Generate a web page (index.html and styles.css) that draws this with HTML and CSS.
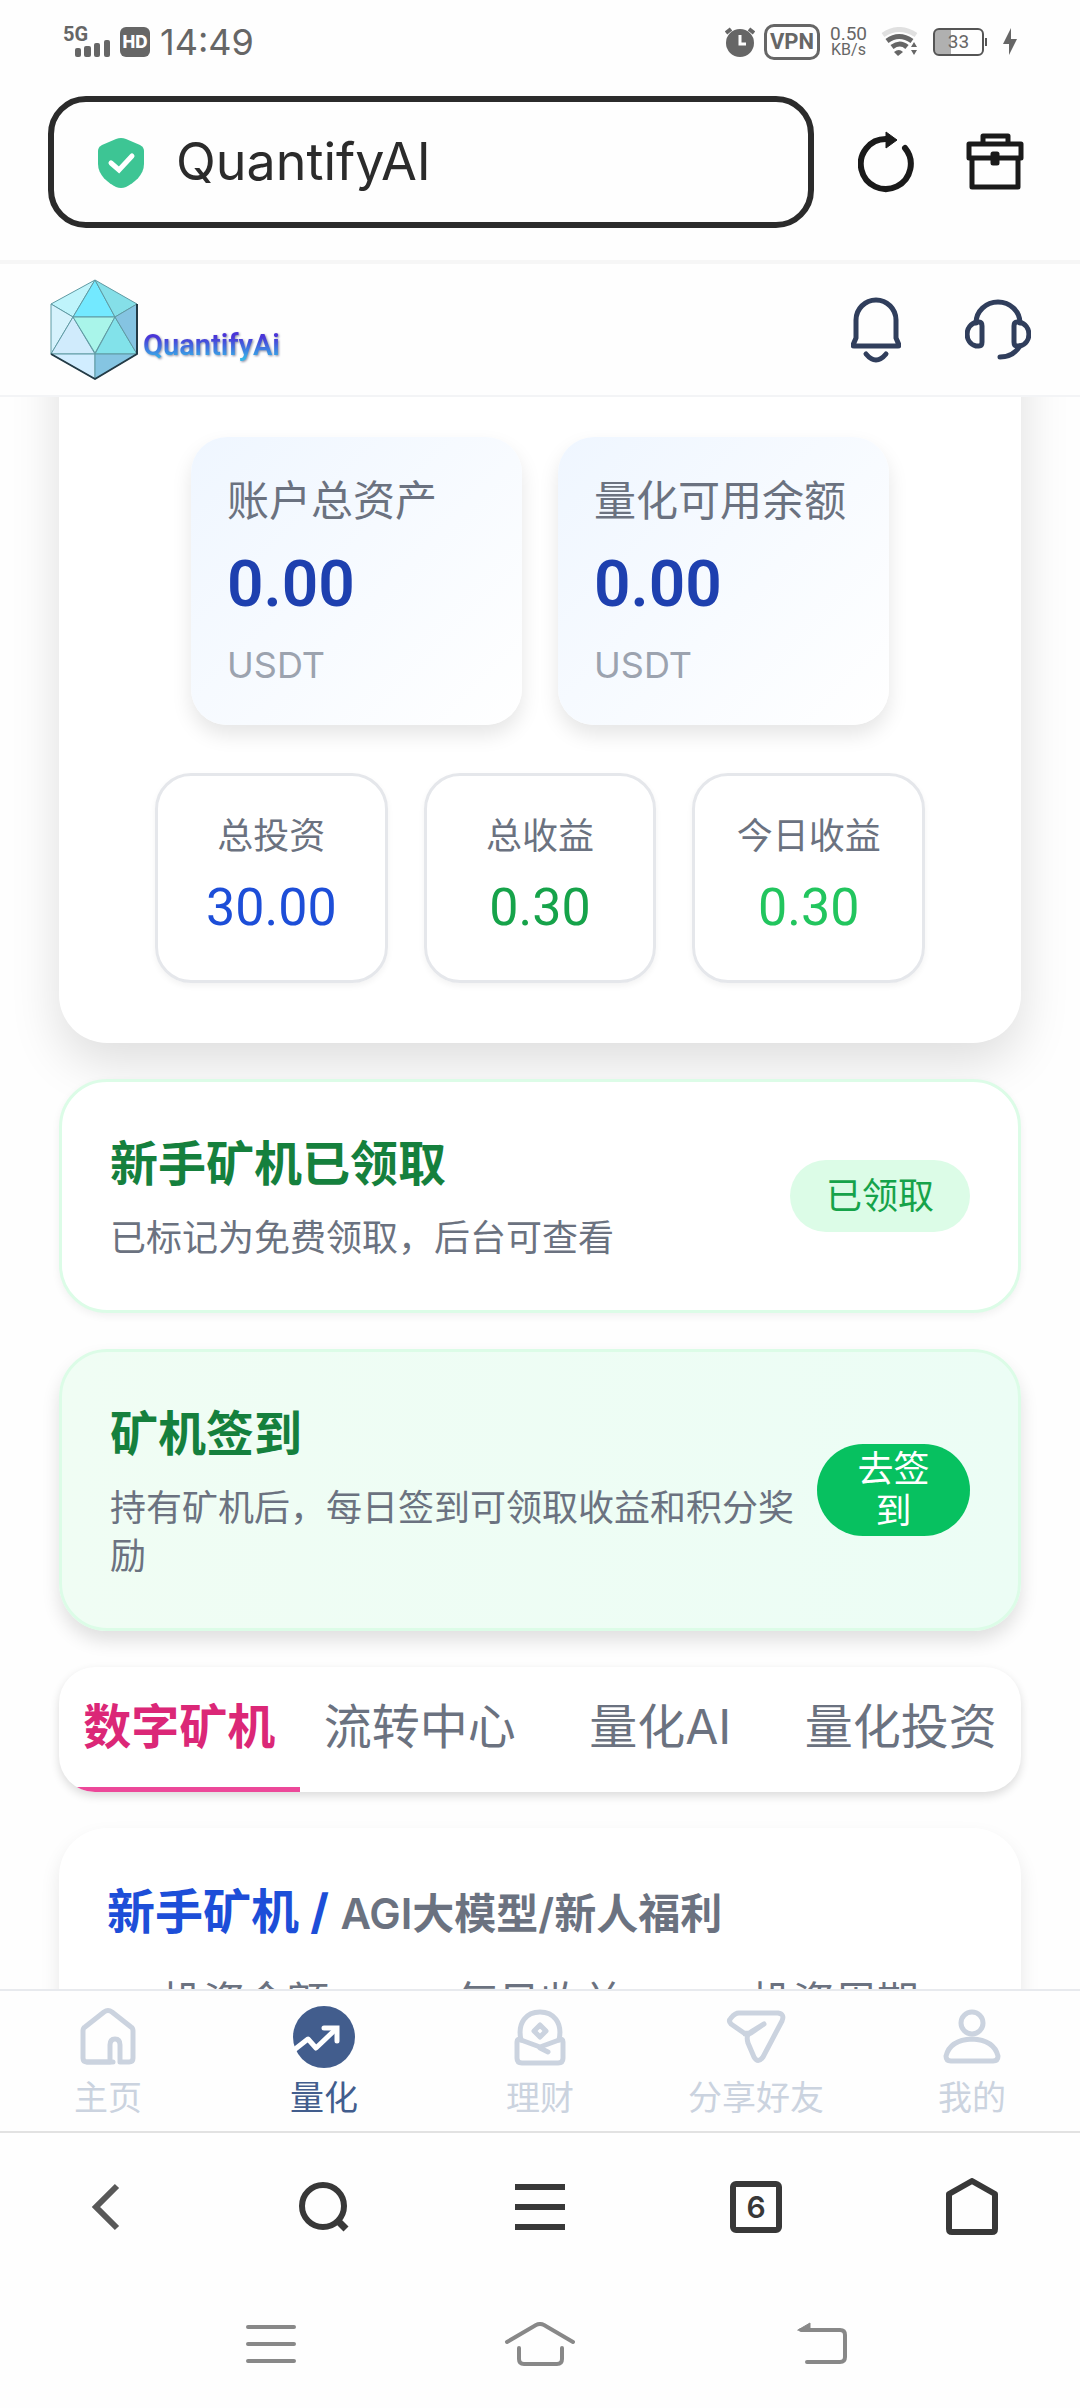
FILE: index.html
```html
<!DOCTYPE html>
<html lang="zh-CN">
<head>
  <meta charset="UTF-8">
  <meta name="viewport" content="width=device-width, initial-scale=1.0">
  <title>QuantifyAI</title>
  <link rel="stylesheet" href="styles.css">
</head>
<body>
  <!-- status bar -->
  <div class="status">
    <svg width="48" height="48" viewBox="0 -8 48 48" fill="#666">
      <text x="0" y="15" class="net">5G</text>
      <rect x="12" y="22" width="6" height="9" rx="2"/>
      <rect x="21" y="20" width="7" height="11" rx="2"/>
      <rect x="31" y="17" width="6" height="14" rx="2"/>
      <rect x="41" y="14" width="6" height="17" rx="2"/>
    </svg>
    <span class="hd">HD</span>
    <span class="time">14:49</span>
    <div class="status-right">
      <svg width="30" height="30" viewBox="0 0 30 30">
        <circle cx="15" cy="16" r="14" fill="#666"/>
        <path d="M1 6l5-4M24 2l5 4" stroke="#666" stroke-width="4"/>
        <path d="M15 8v9h6" fill="none" stroke="#fff" stroke-width="3"/>
      </svg>
      <span class="vpn">VPN</span>
      <span class="speed"><b>0.50</b>KB/s</span>
      <svg width="38" height="30" viewBox="0 0 38 30" fill="none" stroke-width="5">
        <path d="M2 8q16-11 33 0" stroke="#e0e0e0"/>
        <path d="M6 14q12-9 25 0M11 20q8-6 15 0" stroke="#666"/>
        <path d="M13 25q5-4 9 0l-5 4z" fill="#666"/>
        <path d="M30 20l3-5 3 5zM30 23l3 5 3-5z" fill="#666"/>
      </svg>
      <span class="battery">33</span>
      <svg width="16" height="28" viewBox="0 0 16 28"><path d="M9 0v11h6L7 27V16H1z" fill="#666"/></svg>
    </div>
  </div>

  <!-- browser toolbar -->
  <div class="toolbar">
    <button class="address">
      <svg width="46" height="51" viewBox="0 0 46 51">
        <path d="M18 2q5-2 10 0l14 6q4 2 4 6v13c0 11-10 19-18 23q-5 2-10 0C10 46 0 38 0 27V14q0-4 4-6z" fill="#3dc594"/>
        <path d="M13 26l8 7 13-14" fill="none" stroke="#fff" stroke-width="5" stroke-linecap="round"/>
      </svg>
      <span>QuantifyAI</span>
    </button>
    <button aria-label="刷新">
      <svg width="56" height="62" viewBox="0 0 56 62">
        <path d="M47 17A25 25 0 1 1 28 8" fill="none" stroke="#1a1a1a" stroke-width="6" stroke-linecap="round"/>
        <path d="M28 1l11 8-11 8z" fill="#1a1a1a" stroke="#1a1a1a" stroke-linejoin="round"/>
      </svg>
    </button>
    <button aria-label="工具箱">
      <svg width="58" height="58" viewBox="-1 0 58 58" fill="none" stroke="#1a1a1a" stroke-width="5" stroke-linejoin="round">
        <path d="M2 11h52v14H2zM5 25v29h46V25M16 11V3h25v8"/>
        <rect x="26" y="21" width="4" height="9"/>
      </svg>
    </button>
  </div>

  <!-- app header -->
  <header class="header">
    <a href="#" class="logo">
      <svg width="88" height="102" viewBox="0 0 88 102" stroke="#5f9aa3" stroke-width="1" stroke-linejoin="round">
        <path d="M45 1L1 25l22 13z" fill="#bff4fb"/>
        <path d="M45 1L23 38h42z" fill="#73e9ff"/>
        <path d="M45 1l20 37 22-13z" fill="#85dfe8"/>
        <path d="M1 25v50l22-37z" fill="#d5f2fc"/>
        <path d="M23 38L1 75h44z" fill="#d0ebfc"/>
        <path d="M23 38h42L45 74z" fill="#a9f5ea"/>
        <path d="M65 38L45 75h42z" fill="#82e2ea"/>
        <path d="M65 38l22-13v50z" fill="#85c4e2"/>
        <path d="M1 75h44v25z" fill="#d1edff"/>
        <path d="M45 75h42l-42 25z" fill="#85c5e2"/>
        <path d="M1 75l44 25 42-25V25" fill="none" stroke="#243b46" stroke-width="2"/>
      </svg>
      <span>QuantifyAi</span>
    </a>
    <button aria-label="通知">
      <svg width="50" height="66" viewBox="0 0 50 66" fill="none" stroke="#303e5c" stroke-width="5" stroke-linecap="round" stroke-linejoin="round">
        <path d="M5 41V23a20 20 0 0 1 40 0v18l3 7q0 1-1 1H3q-1 0-1-1z"/>
        <path d="M15 57q10 12 20 0"/>
      </svg>
    </button>
    <button aria-label="客服">
      <svg width="66" height="62" viewBox="0 0 66 62" fill="none" stroke="#303e5c" stroke-width="5" stroke-linecap="round" stroke-linejoin="round">
        <path d="M11 24a22 21 0 0 1 44 0"/>
        <path d="M12 23h2q3 0 3 4v16q0 4-3 4h-3C-1 44-1 26 12 23z"/>
        <path d="M54 23h-2q-3 0-3 4v16q0 4 3 4h3c12-3 12-21-1-24z"/>
        <path d="M55 47q-7 11-20 11"/>
      </svg>
    </button>
  </header>

  <main class="main">
    <section class="card assets">
      <div class="totals">
        <div class="total"><p>账户总资产</p><strong>0.00</strong><small>USDT</small></div>
        <div class="total"><p>量化可用余额</p><strong>0.00</strong><small>USDT</small></div>
      </div>
      <div class="stats">
        <div class="stat"><p>总投资</p><span class="blue">30.00</span></div>
        <div class="stat"><p>总收益</p><span class="green">0.30</span></div>
        <div class="stat"><p>今日收益</p><span class="light-green">0.30</span></div>
      </div>
    </section>

    <section class="card notice">
      <div>
        <h2>新手矿机已领取</h2>
        <p>已标记为免费领取，后台可查看</p>
      </div>
      <span class="badge">已领取</span>
    </section>

    <section class="card notice checkin">
      <div>
        <h2>矿机签到</h2>
        <p>持有矿机后，每日签到可领取收益和积分奖励</p>
      </div>
      <button class="checkin-btn">去签到</button>
    </section>

    <nav class="tabs">
      <button class="active">数字矿机</button>
      <button>流转中心</button>
      <button>量化AI</button>
      <button>量化投资</button>
    </nav>

    <section class="card product">
      <h2>新手矿机 / <span>AGI大模型/新人福利</span></h2>
      <div class="product-info">
        <p>投资金额</p>
        <p>每日收益</p>
        <p>投资周期</p>
      </div>
    </section>
  </main>

  <!-- app tab bar -->
  <nav class="tabbar">
    <a href="#">
      <svg width="62" height="62" viewBox="0 0 62 62">
        <path d="M36 56H10q-4 0-4-4V25q0-3 2-4L27 6q4-3 8 0l19 15q2 1 2 4v27q0 4-4 4h-9V39q0-6-5-6t-5 6v17"/>
        <path d="M10 56h23"/>
      </svg>
      主页
    </a>
    <a href="#" class="active">
      <svg width="62" height="62" viewBox="0 0 62 62">
        <circle cx="31" cy="31" r="31" fill="#425d8d" stroke="none"/>
        <path d="M1 44l14-11 8 9 21-20" stroke="#fff" stroke-width="5" stroke-linecap="butt"/>
        <path d="M31 22h13v13" stroke="#fff" stroke-width="5" stroke-linejoin="miter"/>
      </svg>
      量化
    </a>
    <a href="#">
      <svg width="62" height="62" viewBox="0 0 62 62">
        <path d="M12 34C8 16 18 6 31 6s23 10 19 28"/>
        <path d="M8 36q0-4 4-2l19 7 19-7q4-2 4 2v16q0 5-5 5H13q-5 0-5-5z"/>
        <path d="M31 19l6 6-6 6-6-6zM31 42l8 4"/>
      </svg>
      理财
    </a>
    <a href="#">
      <svg width="62" height="62" viewBox="0 0 62 62">
        <path d="M14 7h39q7 1 4 8L38 51q-5 7-9 0l-6-14q-2-7 1-9 1-1-5-1L6 18q-3-3 0-6 4-5 8-5zM20 28q3 0 6-2l13-8-13 9"/>
      </svg>
      分享好友
    </a>
    <a href="#">
      <svg width="62" height="62" viewBox="0 0 62 62">
        <circle cx="31" cy="17" r="11"/>
        <path d="M10 55q-5 0-5-5 4-16 26-17 22 1 26 17 0 5-5 5z"/>
      </svg>
      我的
    </a>
  </nav>

  <!-- browser bottom bar -->
  <div class="browser-nav">
    <button aria-label="后退"><svg width="56" height="58" viewBox="0 0 56 58"><path d="M37 8L16 29l21 21" stroke="#585858"/></svg></button>
    <button aria-label="搜索"><svg width="56" height="58" viewBox="0 0 56 58"><circle cx="27" cy="28" r="21"/><path d="M43 44l7 7" stroke-width="7"/></svg></button>
    <button aria-label="菜单"><svg width="56" height="58" viewBox="0 0 56 58"><path d="M3 9h50M3 29h50M3 49h50"/></svg></button>
    <button class="pages" aria-label="标签页"><span>6</span></button>
    <button aria-label="主页"><svg width="56" height="58" viewBox="0 0 56 58"><path d="M5 16L28 3l23 13v35q0 3-3 3H8q-3 0-3-3z" stroke-linejoin="round"/></svg></button>
  </div>

  <!-- system navigation -->
  <div class="system-nav">
    <button aria-label="最近任务"><svg width="90" height="46" viewBox="0 0 90 46"><path d="M22 5h46M22 22h46M22 39h46"/></svg></button>
    <button aria-label="主屏幕"><svg width="90" height="46" viewBox="0 0 90 46"><path d="M12 20L41 3q4-2 8 0l29 17M24 26v11q0 5 5 5h33q5 0 5-5V26"/></svg></button>
    <button aria-label="返回"><svg width="90" height="46" viewBox="0 0 90 46"><path d="M37 8h39q5 0 5 5v22q0 5-5 5H43"/><path d="M34 8l12-7v7z" fill="#888" stroke-width="1"/></svg></button>
  </div>
</body>
</html>
```

FILE: styles.css
```css
*{margin:0;padding:0;box-sizing:border-box;}
body{height:100vh;display:flex;flex-direction:column;background:#fefefe;color:#6b7280;font-family:"Inter","Noto Sans CJK SC",sans-serif;font-size:36px;line-height:48px;}
button{border:none;background:none;font:inherit;color:inherit;cursor:pointer;}
a{color:inherit;text-decoration:none;}
svg{display:block;flex:none;}

.status{display:flex;align-items:center;height:84px;padding:0 62px 0 63px;color:#666;}
.net{font-family:Roboto,sans-serif;font-size:20px;font-weight:700;}
.hd{width:30px;height:30px;margin-left:9px;border-radius:6px;background:#666;color:#fff;font-size:17px;font-weight:800;line-height:30px;text-align:center;}
.time{margin-left:10px;font-size:36px;}
.status-right{display:flex;align-items:center;margin-left:auto;font-family:Roboto,sans-serif;}
.vpn{margin-left:9px;padding:0 3px;border:3px solid #666;border-radius:10px;font-size:22px;font-weight:700;line-height:30px;}
.speed{margin:0 14px 0 10px;font-size:16px;line-height:16px;text-align:center;}
.speed b{display:block;font-size:19px;font-weight:400;}
.battery{position:relative;width:51px;height:28px;margin:0 18px 0 14px;border:2px solid #555;border-radius:6px;background:linear-gradient(90deg,#b0b0b0 16px,transparent 16px);font-size:19px;line-height:24px;text-align:center;}
.battery::after{content:"";position:absolute;right:-5px;top:8px;width:2px;height:8px;background:#555;}

.toolbar{display:flex;align-items:center;gap:44px;padding:12px 56px 32px 48px;border-bottom:4px solid #f6f6f6;}
.address{flex:1;display:flex;align-items:center;gap:32px;height:132px;padding:0 44px;border:6px solid #2b2b2b;border-radius:38px;color:#2b2b2b;font-size:52px;}
.toolbar button:last-child{margin-left:8px;}

.header{display:flex;align-items:center;height:133px;padding:0 49px 0 50px;border-bottom:2px solid #f3f4f6;}
.header button{margin-left:64px;}
.logo{display:flex;align-items:flex-end;gap:5px;margin-right:auto;}
.logo span{margin-bottom:16px;background:linear-gradient(#4a35d8 30%,#36b5e8 85%);background-clip:text;-webkit-background-clip:text;color:transparent;font-family:Roboto,sans-serif;font-size:29px;font-weight:600;line-height:40px;filter:drop-shadow(1px 1px 1px rgba(20,30,80,.5));}

.main{flex:1;min-height:0;overflow:hidden;display:flex;flex-direction:column;gap:36px;padding:0 59px;}
.main > *{flex:none;}
.card{border-radius:48px;background:#fff;}

/* scrolled part way under the header */
.assets{margin-top:-120px;padding:160px 48px 60px;box-shadow:0 20px 50px rgba(0,0,0,.13);}
.totals{display:grid;grid-template-columns:1fr 1fr;gap:36px;max-width:698px;margin:0 auto 48px;}
.total{padding:36px;border-radius:36px;background:linear-gradient(135deg,#eff6ff,#fff);box-shadow:0 10px 20px rgba(0,0,0,.1);}
.total p{font-size:42px;line-height:56px;white-space:nowrap;}
.total strong{display:block;margin:12px 0;color:#1e40af;font-family:Roboto,sans-serif;font-size:64px;font-weight:600;line-height:88px;}
.total small{display:block;color:#9ca3af;font-size:36px;}
.stats{display:grid;grid-template-columns:repeat(3,1fr);gap:36px;max-width:770px;margin:0 auto;}
.stat{padding:36px 12px;border:3px solid #e5e7eb;border-radius:36px;box-shadow:0 3px 6px rgba(0,0,0,.05);text-align:center;}
.stat span{display:block;margin-top:12px;font-family:Roboto,sans-serif;font-size:52px;line-height:72px;}
.blue{color:#1d4ed8;}
.green{color:#16a34a;}
.light-green{color:#22c55e;}

.notice{display:flex;align-items:center;justify-content:space-between;gap:20px;padding:48px;border:3px solid #dcfce7;box-shadow:0 3px 8px rgba(0,0,0,.06);}
.notice h2{margin-bottom:16px;color:#15803d;font-size:48px;line-height:68px;}
.badge{flex:none;padding:12px 36px;border-radius:36px;background:#dcfce7;color:#16a34a;}
.checkin{background:linear-gradient(90deg,#f0fdf4,#ecfdf5);box-shadow:0 10px 18px rgba(0,0,0,.12);}
.checkin-btn{flex:none;width:153px;padding:4px 36px;border-radius:48px;background:#07c160;color:#fff;line-height:42px;}

.tabs{display:flex;overflow:hidden;border-radius:36px;background:#fff;box-shadow:0 4px 10px rgba(0,0,0,.14);}
.tabs button{flex:1;padding:24px 0;border-bottom:5px solid transparent;font-size:48px;line-height:72px;white-space:nowrap;}
.tabs .active{border-color:#ec4899;color:#db2777;font-weight:700;}

.product{padding:48px;box-shadow:0 10px 20px rgba(0,0,0,.09);}
.product h2{color:#1d4ed8;font-size:48px;line-height:72px;}
.product h2 span{font-size:42px;font-weight:600;color:#6b7280;}
.product-info{display:grid;grid-template-columns:repeat(3,1fr);gap:18px;margin-top:24px;font-size:42px;line-height:56px;text-align:center;}

.tabbar{position:relative;display:flex;padding:15px 0 11px;border-top:2px solid #e8eaee;border-bottom:2px solid #e2e2e2;background:#fefefe;color:#cbd3df;}
.tabbar a{flex:1;display:flex;flex-direction:column;align-items:center;gap:8px;font-size:34px;line-height:44px;}
.tabbar svg{fill:none;stroke:currentColor;stroke-width:5;stroke-linecap:round;stroke-linejoin:round;}
.tabbar .active{color:#425d8d;}

.browser-nav{display:flex;height:148px;}
.browser-nav button{flex:1;display:flex;align-items:center;justify-content:center;}
.browser-nav svg{fill:none;stroke:#383838;stroke-width:6;}
.pages span{width:52px;height:52px;border:6px solid #383838;border-radius:6px;color:#383838;font-size:30px;font-weight:600;line-height:40px;}

.system-nav{display:flex;justify-content:space-between;height:127px;padding:0 226px;}
.system-nav svg{fill:none;stroke:#888;stroke-width:4;stroke-linecap:round;}
```
